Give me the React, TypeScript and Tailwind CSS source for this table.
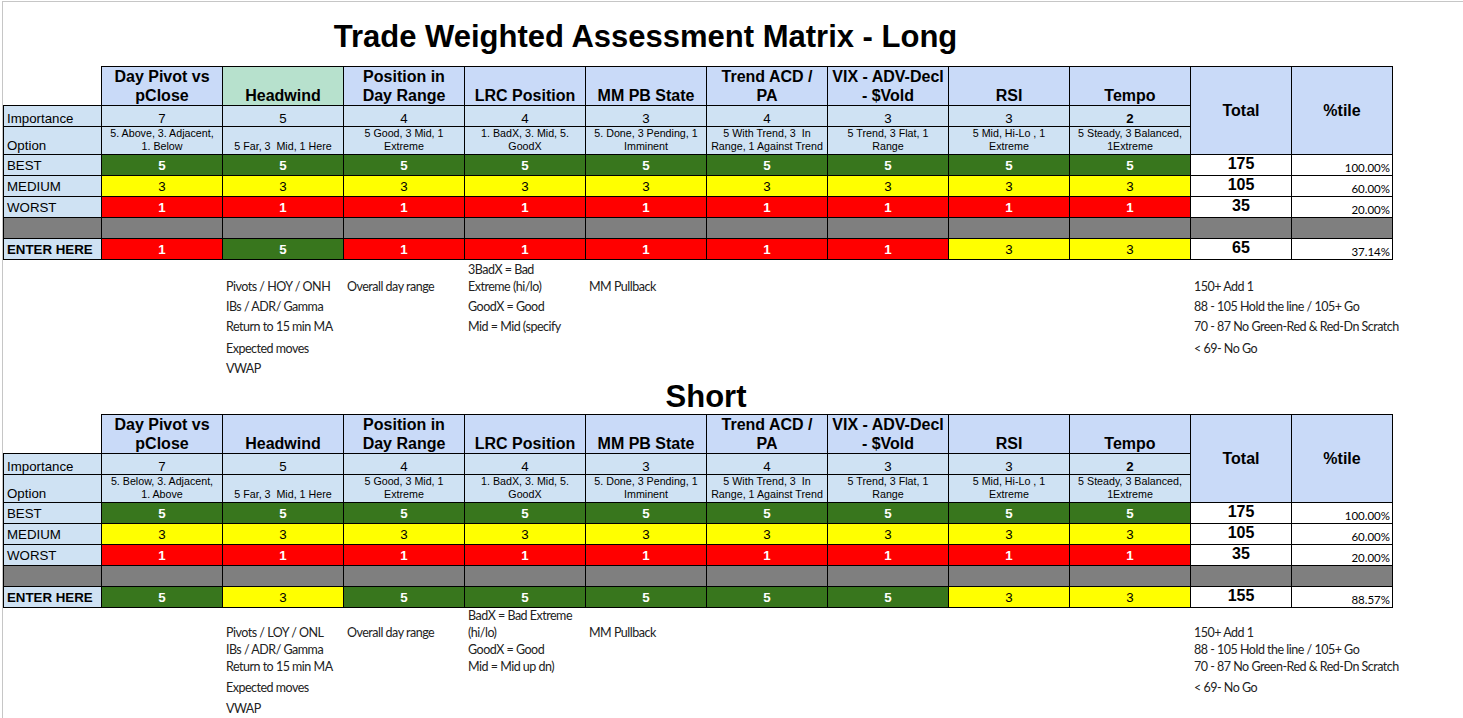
import React from 'react';

// Spreadsheet-style assessment matrix (Long / Short)

type Score = 5 | 3 | 1;

interface Header {
  lines: string[];
  green?: boolean;
}

const headers: Header[] = [
  { lines: ['Day Pivot vs', 'pClose'] },
  { lines: ['Headwind'], green: true },
  { lines: ['Position in', 'Day Range'] },
  { lines: ['LRC Position'] },
  { lines: ['MM PB State'] },
  { lines: ['Trend ACD /', 'PA'] },
  { lines: ['VIX - ADV-Decl', '- $Vold'] },
  { lines: ['RSI'] },
  { lines: ['Tempo'] },
];

const importance = [7, 5, 4, 4, 3, 4, 3, 3, 2];

const optionsRest: string[][] = [
  ['5 Far, 3\u00a0\u00a0Mid, 1 Here'],
  ['5 Good, 3 Mid, 1', 'Extreme'],
  ['1. BadX, 3. Mid, 5.', 'GoodX'],
  ['5. Done, 3 Pending, 1', 'Imminent'],
  ['5 With Trend, 3\u00a0\u00a0In', 'Range, 1 Against Trend'],
  ['5 Trend, 3 Flat, 1', 'Range'],
  ['5 Mid, Hi-Lo , 1', 'Extreme'],
  ['5 Steady, 3 Balanced,', '1Extreme'],
];

const scoreClass: Record<Score, string> = {
  5: 'bg-[#38761d] text-white font-bold',
  3: 'bg-[#ffff00] text-black',
  1: 'bg-[#ff0000] text-white font-bold',
};

const fixedRows: { label: string; score: Score; total: number; pct: string }[] = [
  { label: 'BEST', score: 5, total: 175, pct: '100.00%' },
  { label: 'MEDIUM', score: 3, total: 105, pct: '60.00%' },
  { label: 'WORST', score: 1, total: 35, pct: '20.00%' },
];

const ColGroup = () => (
  <colgroup>
    <col className="w-[98px]" />
    {Array.from({ length: 9 }).map((_, i) => (
      <col key={i} className="w-[121px]" />
    ))}
    <col className="w-[101px]" />
    <col className="w-[101px]" />
  </colgroup>
);

interface MatrixProps {
  headwindGreen: boolean;
  firstOption: string[];
  enter: Score[];
  enterTotal: number;
  enterPct: string;
}

const Matrix: React.FC<MatrixProps> = ({ headwindGreen, firstOption, enter, enterTotal, enterPct }) => {
  const options = [firstOption, ...optionsRest];
  const labelCell = 'border border-black bg-[#cfe2f3] p-0 pl-[3px] text-left align-bottom whitespace-nowrap';

  return (
    <table className="w-[1389px] table-fixed border-collapse font-['Liberation_Sans',Arial,sans-serif] text-[13.3px] text-black">
      <ColGroup />
      <tbody>
        {/* column headers */}
        <tr className="h-[38px]">
          <td className="p-0" />
          {headers.map((h, i) => (
            <td
              key={i}
              className={`border border-black p-0 text-center align-bottom text-[16px] font-bold leading-[19px] ${
                h.green && headwindGreen ? 'bg-[#b7e1cd]' : 'bg-[#c9daf8]'
              }`}
            >
              {h.lines.map((l, j) => (
                <div key={j}>{l}</div>
              ))}
            </td>
          ))}
          <td rowSpan={3} className="border border-black bg-[#c9daf8] p-0 text-center align-middle text-[16px] font-bold">
            Total
          </td>
          <td rowSpan={3} className="border border-black bg-[#c9daf8] p-0 text-center align-middle text-[16px] font-bold">
            %tile
          </td>
        </tr>

        {/* importance */}
        <tr className="h-[21px]">
          <td className={`${labelCell} leading-[15px]`}>Importance</td>
          {importance.map((v, i) => (
            <td
              key={i}
              className={`border border-black bg-[#cfe2f3] p-0 text-center align-bottom leading-[15px] ${
                i === 8 ? 'font-bold' : ''
              }`}
            >
              {v}
            </td>
          ))}
        </tr>

        {/* option */}
        <tr className="h-[28px]">
          <td className={`${labelCell} pb-px leading-[15px]`}>Option</td>
          {options.map((o, i) => (
            <td key={i} className="border border-black bg-[#cfe2f3] p-0 pb-px text-center align-bottom text-[10.7px] leading-[13px]">
              {o.map((l, j) => (
                <div key={j} className="whitespace-nowrap">
                  {l}
                </div>
              ))}
            </td>
          ))}
        </tr>

        {/* best / medium / worst */}
        {fixedRows.map((r) => (
          <tr key={r.label} className="h-[21px]">
            <td className={`${labelCell} pb-px leading-[17px]`}>{r.label}</td>
            {importance.map((_, i) => (
              <td key={i} className={`border border-black p-0 pb-px text-center align-bottom leading-[17px] ${scoreClass[r.score]}`}>
                {r.score}
              </td>
            ))}
            <td className="border border-black bg-white p-0 text-center align-top text-[16px] font-bold leading-[18px]">
              {r.total}
            </td>
            <td className="border border-black bg-white p-0 pr-[2px] text-right align-bottom font-['Lato',sans-serif] text-[11.5px] leading-[15px]">
              {r.pct}
            </td>
          </tr>
        ))}

        {/* spacer */}
        <tr className="h-[21px]">
          {Array.from({ length: 12 }).map((_, i) => (
            <td key={i} className="border border-black bg-[#7f7f7f] p-0" />
          ))}
        </tr>

        {/* enter here */}
        <tr className="h-[21px]">
          <td className={`${labelCell} pb-px font-bold leading-[17px]`}>ENTER HERE</td>
          {enter.map((s, i) => (
            <td key={i} className={`border border-black p-0 pb-px text-center align-bottom leading-[17px] ${scoreClass[s]}`}>
              {s}
            </td>
          ))}
          <td className="border border-black bg-white p-0 text-center align-top text-[16px] font-bold leading-[18px]">
            {enterTotal}
          </td>
          <td className="border border-black bg-white p-0 pr-[2px] text-right align-bottom font-['Lato',sans-serif] text-[11.5px] leading-[15px]">
            {enterPct}
          </td>
        </tr>
      </tbody>
    </table>
  );
};

const note =
  "self-end pl-1 font-['Lato',sans-serif] text-[12.5px] tracking-[-0.5px] leading-[17px] whitespace-nowrap text-[#222]";

const LongNotes = () => (
  <div className="grid grid-cols-[98px_repeat(9,121px)_101px_101px] grid-rows-[35px_20px_20px_22px_20px]">
    <div className={`${note} col-start-3 row-start-1`}>Pivots / HOY / ONH</div>
    <div className={`${note} col-start-4 row-start-1`}>Overall day range</div>
    <div className={`${note} col-start-5 row-start-1`}>
      3BadX = Bad
      <br />
      Extreme (hi/lo)
    </div>
    <div className={`${note} col-start-6 row-start-1`}>MM Pullback</div>
    <div className={`${note} col-start-11 row-start-1`}>150+ Add 1</div>

    <div className={`${note} col-start-3 row-start-2`}>IBs / ADR/ Gamma</div>
    <div className={`${note} col-start-5 row-start-2`}>GoodX = Good</div>
    <div className={`${note} col-start-11 row-start-2`}>88 - 105 Hold the line / 105+ Go</div>

    <div className={`${note} col-start-3 row-start-3`}>Return to 15 min MA</div>
    <div className={`${note} col-start-5 row-start-3`}>Mid = Mid (specify</div>
    <div className={`${note} col-start-11 row-start-3`}>70 - 87 No Green-Red &amp; Red-Dn Scratch</div>

    <div className={`${note} col-start-3 row-start-4`}>Expected moves</div>
    <div className={`${note} col-start-11 row-start-4`}>&lt; 69- No Go</div>

    <div className={`${note} col-start-3 row-start-5`}>VWAP</div>
  </div>
);

const ShortNotes = () => (
  <div className="grid grid-cols-[98px_repeat(9,121px)_101px_101px] grid-rows-[33px_17px_17px_21px_21px]">
    <div className={`${note} col-start-3 row-start-1`}>Pivots / LOY / ONL</div>
    <div className={`${note} col-start-4 row-start-1`}>Overall day range</div>
    <div className={`${note} col-start-5 row-start-1`}>
      BadX = Bad Extreme
      <br />
      (hi/lo)
    </div>
    <div className={`${note} col-start-6 row-start-1`}>MM Pullback</div>
    <div className={`${note} col-start-11 row-start-1`}>150+ Add 1</div>

    <div className={`${note} col-start-3 row-start-2`}>IBs / ADR/ Gamma</div>
    <div className={`${note} col-start-5 row-start-2`}>GoodX = Good</div>
    <div className={`${note} col-start-11 row-start-2`}>88 - 105 Hold the line / 105+ Go</div>

    <div className={`${note} col-start-3 row-start-3`}>Return to 15 min MA</div>
    <div className={`${note} col-start-5 row-start-3`}>Mid = Mid up dn)</div>
    <div className={`${note} col-start-11 row-start-3`}>70 - 87 No Green-Red &amp; Red-Dn Scratch</div>

    <div className={`${note} col-start-3 row-start-4`}>Expected moves</div>
    <div className={`${note} col-start-11 row-start-4`}>&lt; 69- No Go</div>

    <div className={`${note} col-start-3 row-start-5`}>VWAP</div>
  </div>
);

export default function App() {
  return (
    <div className="h-screen overflow-hidden bg-white pt-px">
      <div className="ml-[2px] h-full border-l border-t border-[#c6c6c6]">
        {/* Long title */}
        <div className="grid h-[64px] grid-cols-[98px_repeat(9,121px)_101px_101px]">
          <div className="col-span-9 col-start-2 pt-[19px] text-center font-['Liberation_Sans',Arial,sans-serif] text-[31px] font-bold leading-none text-black">
            Trade Weighted Assessment Matrix - Long
          </div>
        </div>

        <Matrix
          headwindGreen
          firstOption={['5. Above, 3. Adjacent,', '1. Below']}
          enter={[1, 5, 1, 1, 1, 1, 1, 3, 3]}
          enterTotal={65}
          enterPct="37.14%"
        />

        <LongNotes />

        {/* Short title */}
        <div className="grid h-[37px] grid-cols-[98px_repeat(9,121px)_101px_101px]">
          <div className="col-span-8 col-start-3 pt-[4px] text-center font-['Liberation_Sans',Arial,sans-serif] text-[31px] font-bold leading-none text-black">
            Short
          </div>
        </div>

        <Matrix
          headwindGreen={false}
          firstOption={['5. Below, 3. Adjacent,', '1. Above']}
          enter={[5, 3, 5, 5, 5, 5, 5, 3, 3]}
          enterTotal={155}
          enterPct="88.57%"
        />

        <ShortNotes />
      </div>
    </div>
  );
}
